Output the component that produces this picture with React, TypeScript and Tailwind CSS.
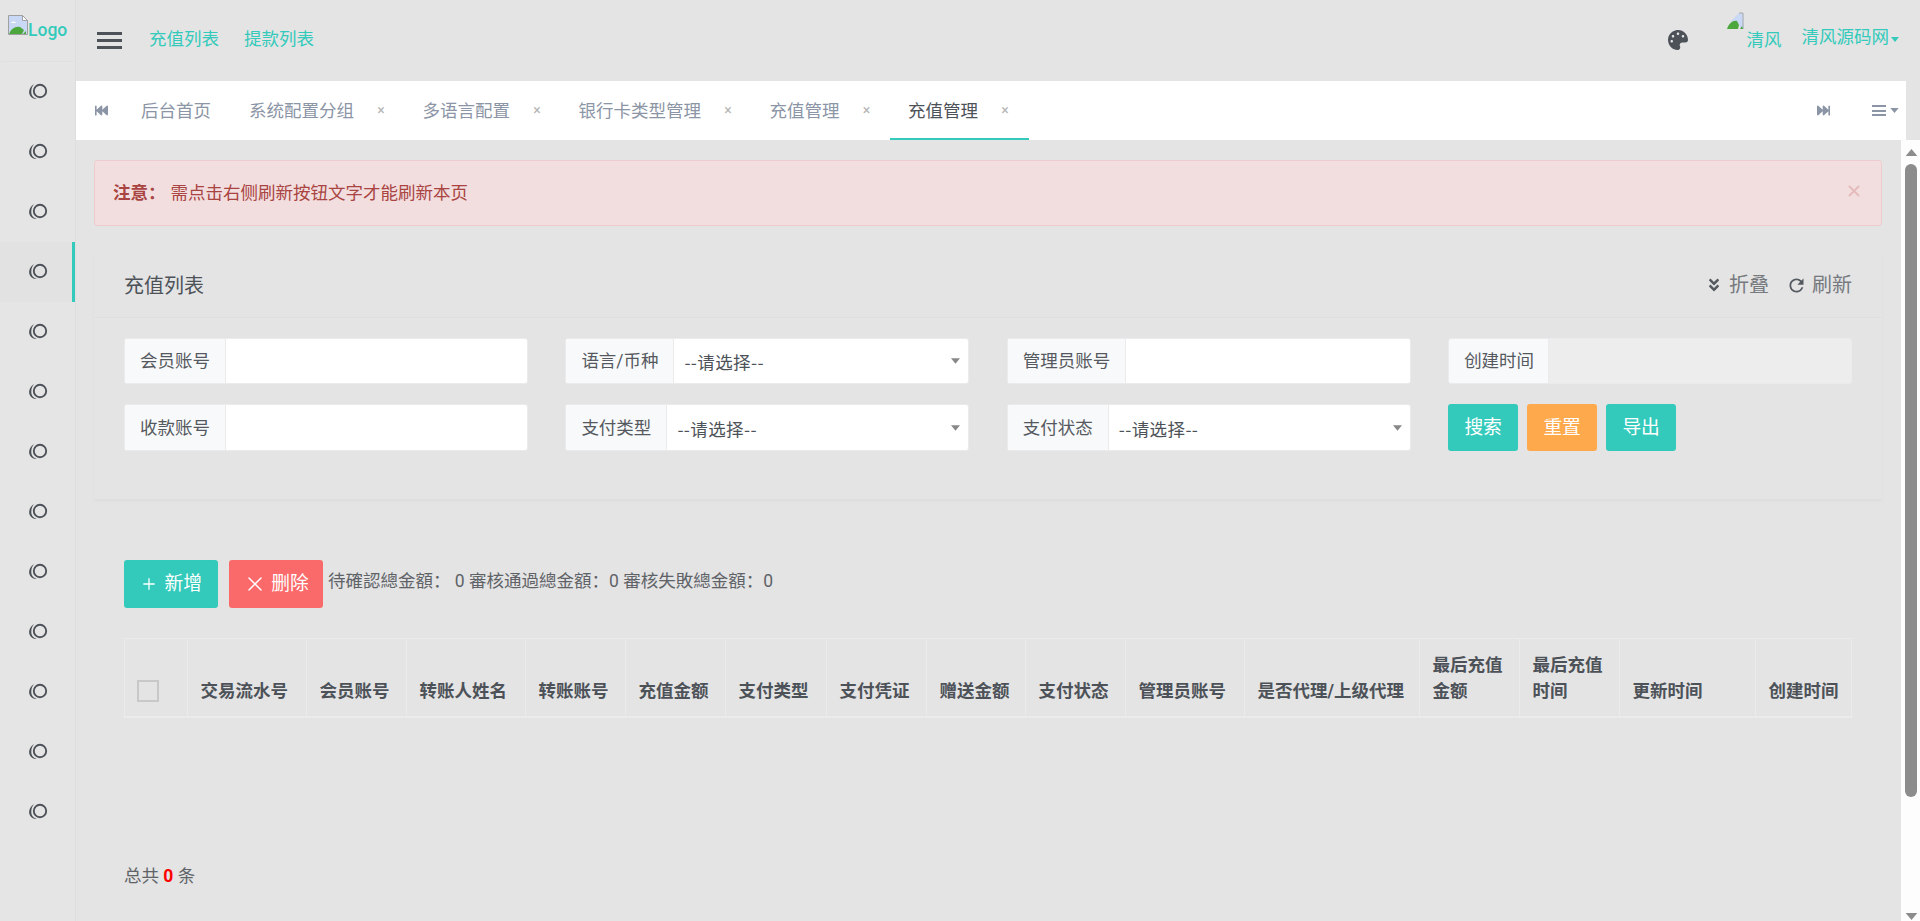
import React from "react";
import { FaPalette, FaFastBackward, FaFastForward, FaAngleDoubleDown } from "react-icons/fa";
import { MdRefresh } from "react-icons/md";
import { Plus, X } from "lucide-react";

const SideIcon = () => (
  <svg width="20" height="20" viewBox="0 0 20 20" fill="none">
    <circle cx="12" cy="10" r="6.2" strokeWidth="1.9" stroke="#4d5259" />
    <path d="M6 3C1.5 6 0 11 2 14.5C3.5 17 6 18.5 9 18C5.5 17 3.3 14.5 3.3 11C3.3 8 4 5.5 6 3Z" fill="#4d5259" />
  </svg>
);

const BrokenImage = () => (
  <svg width="20" height="20" viewBox="0 0 20 20" className="shrink-0">
    <path d="M0.5 0.5H14.5L19.5 5.5V19.5H0.5Z" fill="#c9d8f5" stroke="#a0a0a0" />
    <path d="M14.5 .5V5.5H19.5Z" fill="#fff" stroke="#a0a0a0" />
    <path d="M3 8c1-2 4-2 5 0z" fill="#fff" />
    <path d="M1 19C3 14 7 11 12 12L16 15L14 19Z" fill="#4ca83c" />
    <path d="M15 19l3-3v3z" fill="#4ca83c" />
  </svg>
);

const Tab = ({ label, active, closable = true }: { label: string; active?: boolean; closable?: boolean }) => (
  <div className={`flex h-full items-center pl-[18px] border-b-2 ${active ? "border-[#33cabb] text-[#4d5259]" : "border-transparent text-[#8b95a5]"} ${closable ? "" : "pr-[20px]"}`}>
    <span className="mt-[2px]">{label}</span>
    {closable && (
      <>
        <span className="ml-[21px] w-[12px] text-center text-[14px] text-[#b5b5b5]">×</span>
        <span className="w-[17.5px]" />
      </>
    )}
  </div>
);

const Caret = ({ className }: { className: string }) => (
  <svg viewBox="0 0 10 6" className={className} fill="currentColor"><path d="M0 0h10L5 6z" /></svg>
);

const Field = ({ label, labelW, select, disabled }: { label: string; labelW: string; select?: boolean; disabled?: boolean }) => (
  <div className={`flex h-full overflow-hidden rounded-[3px] border border-[#ebebeb] ${disabled ? "bg-[#ededed]" : "bg-white"}`}>
    <div className={`flex items-center justify-start shrink-0 bg-[#f8f9fa] border-r border-[#ebebeb] pl-[15px] text-[#55595f] ${labelW}`}>{label}</div>
    {select ? (
      <div className="flex flex-1 items-center justify-between pl-[10px] pr-[8px] text-[#4d5259]">
        <span className="mt-[2px] font-['Noto_Sans_CJK_SC',sans-serif] tracking-[0.4px]">--请选择--</span>
        <Caret className="w-[9px] h-[6px] text-[#888888]" />
      </div>
    ) : (
      <input readOnly disabled={disabled} className="flex-1 min-w-0 bg-transparent outline-none" />
    )}
  </div>
);

const columns: { label: string; w: string }[] = [
  { label: "交易流水号", w: "w-[119px]" },
  { label: "会员账号", w: "w-[100px]" },
  { label: "转账人姓名", w: "w-[119px]" },
  { label: "转账账号", w: "w-[100px]" },
  { label: "充值金额", w: "w-[100px]" },
  { label: "支付类型", w: "w-[101px]" },
  { label: "支付凭证", w: "w-[100px]" },
  { label: "赠送金额", w: "w-[99px]" },
  { label: "支付状态", w: "w-[100px]" },
  { label: "管理员账号", w: "w-[119px]" },
  { label: "是否代理/上级代理", w: "w-[175px]" },
  { label: "最后充值金额", w: "w-[100px]" },
  { label: "最后充值时间", w: "w-[100px]" },
  { label: "更新时间", w: "w-[136px]" },
  { label: "创建时间", w: "w-[96px]" },
];

export default function App() {
  return (
    <div className="flex h-[921px] w-[1920px] overflow-hidden bg-[#e4e4e4] font-['Roboto','Noto_Sans_CJK_SC',sans-serif] text-[17.5px] leading-[26px] text-[#5f6368]">
      {/* sidebar */}
      <aside className="w-[76px] shrink-0 border-r border-[#dedede] bg-[#e5e5e5]">
        <div className="mx-px flex h-[62px] items-start border-b border-[#e0e0e0] pl-[7px] pt-[15px]">
          <BrokenImage />
          <span className="mt-[2px] font-medium text-[#33cabb]">Logo</span>
        </div>
        {Array.from({ length: 13 }).map((_, i) => (
          <div key={i} className={`flex h-[60px] items-center pb-[2px] pl-[28px] ${i === 3 ? "border-r-[3px] border-[#33cabb] bg-[#e2e2e2]" : ""}`}>
            <SideIcon />
          </div>
        ))}
      </aside>

      <div className="flex min-w-0 flex-1 flex-col">
        {/* top bar */}
        <header className="flex h-[81px] shrink-0 items-center">
          <div className="ml-[21px] flex h-[17px] w-[25px] flex-col justify-between">
            <span className="h-[3px] bg-[#4d5259]" />
            <span className="h-[3px] bg-[#4d5259]" />
            <span className="h-[3px] bg-[#4d5259]" />
          </div>
          <span className="ml-[27px] mt-[-4px] text-[#33cabb]">充值列表</span>
          <span className="ml-[25px] mt-[-4px] text-[#33cabb]">提款列表</span>
          <FaPalette className="ml-auto mt-[-2px] text-[20px] text-[#4d5259]" />
          <svg width="18" height="18" viewBox="0 0 18 18" className="ml-[39px] mt-[-40px]">
            <path d="M3 10L12 1h4l1 16h-3l-4-8z" fill="#c9d8f5" />
            <path d="M12 1h4v16" fill="none" stroke="#a8a8a8" />
            <path d="M0 17C2 11 6 8 10 9l2 4-1 4z" fill="#4ca83c" />
            <path d="M13 17l2-3 1 3z" fill="#4ca83c" />
          </svg>
          <span className="ml-[2px] mt-[-1px] text-[#33cabb]">清风</span>
          <span className="ml-[20px] mt-[-7px] text-[#33cabb]">清风源码网</span>
          <Caret className="ml-[2px] mr-[21px] mt-[-3px] h-[5px] w-[8px] text-[#33cabb]" />
        </header>

        {/* tabs */}
        <nav className="mr-[14px] flex h-[59px] shrink-0 items-center bg-white pl-[19px] pr-[7px]">
          <FaFastBackward className="text-[13px] text-[#8b95a5]" />
          <div className="ml-[15px] flex h-full items-center">
            <Tab label="后台首页" closable={false} />
            <Tab label="系统配置分组" />
            <Tab label="多语言配置" />
            <Tab label="银行卡类型管理" />
            <Tab label="充值管理" />
            <Tab label="充值管理" active />
          </div>
          <FaFastForward className="ml-auto text-[13px] text-[#8b95a5]" />
          <div className="ml-[42px] flex h-[11px] w-[14px] flex-col justify-between">
            <span className="h-[2px] bg-[#8b95a5]" />
            <span className="h-[2px] bg-[#8b95a5]" />
            <span className="h-[2px] bg-[#8b95a5]" />
          </div>
          <Caret className="ml-[4px] h-[5px] w-[9px] text-[#8b95a5]" />
        </nav>

        <div className="flex min-h-0 flex-1">
          <main className="min-w-0 flex-1 pl-[18px] pr-[19px] pt-[20px]">
            {/* alert */}
            <div className="flex h-[66px] items-center justify-between rounded-[3px] border border-[#eccccf] bg-[#f2dede] pl-[18px] pr-[18px] text-[#a94442]">
              <p>
                <strong className="font-bold">注意：</strong>
                <span className="ml-[5px]">需点击右侧刷新按钮文字才能刷新本页</span>
              </p>
              <X size={18} strokeWidth={2.6} className="mt-[-4px] text-[#e5bcbd]" />
            </div>

            {/* search card */}
            <section className="mt-[27px] h-[246px] shadow-[0_2px_3px_rgba(0,0,0,0.035)]">
              <div className="flex h-[65px] items-center justify-between border-b border-[#dfdfdf] px-[30px]">
                <h2 className="mt-[2px] text-[20px] font-normal text-[#4d5259]">充值列表</h2>
                <div className="flex items-center text-[20px] text-[#76797e]">
                  <FaAngleDoubleDown className="text-[16px] text-[#555a60]" />
                  <span className="ml-[7px]">折叠</span>
                  <MdRefresh className="ml-[17px] text-[21px] text-[#555a60]" />
                  <span className="ml-[5px]">刷新</span>
                </div>
              </div>
              <div className="grid grid-cols-4 grid-rows-[46px_47px] gap-x-[37.5px] gap-y-[20px] px-[30px] pt-[20px]">
                <Field label="会员账号" labelW="w-[101px]" />
                <Field label="语言/币种" labelW="w-[108px]" select />
                <Field label="管理员账号" labelW="w-[118px]" />
                <Field label="创建时间" labelW="w-[100px]" disabled />
                <Field label="收款账号" labelW="w-[101px]" />
                <Field label="支付类型" labelW="w-[101px]" select />
                <Field label="支付状态" labelW="w-[101px]" select />
                <div className="flex gap-[9px] text-[18.75px]">
                  <button className="w-[70px] rounded-[3px] bg-[#33cabb] text-white">搜索</button>
                  <button className="w-[70px] rounded-[3px] bg-[#fea94c] text-white">重置</button>
                  <button className="w-[70px] rounded-[3px] bg-[#33cabb] text-white">导出</button>
                </div>
              </div>
            </section>

            {/* list card */}
            <section className="mt-[35px] px-[30px] pt-[26px]">
              <div className="flex h-[48px] items-start">
                <button className="flex h-[48px] w-[94px] items-center justify-center gap-[6.5px] rounded-[3px] bg-[#33cabb] text-[18.75px] text-white">
                  <Plus size={18} strokeWidth={1.7} />新增
                </button>
                <button className="ml-[11px] flex h-[48px] w-[94px] items-center justify-center gap-[4px] rounded-[3px] bg-[#fb6a6a] text-[18.75px] text-white">
                  <X size={24} strokeWidth={1.5} />删除
                </button>
                <p className="ml-[5px] mt-[8px] whitespace-pre">待確認總金額： 0 審核通過總金額：0 審核失敗總金額：0</p>
              </div>

              <table className="mt-[30px] w-[1727px] table-fixed border-collapse">
                <thead>
                  <tr className="h-[78px] border-t border-b-2 border-[#ebebeb]">
                    <th className="w-[63px] border-x border-[#ebebeb] pb-[14px] pl-[12px] align-bottom">
                      <span className="block h-[22px] w-[22px] border-2 border-[#c8c8c8]" />
                    </th>
                    {columns.map((c) => (
                      <th key={c.label + c.w} className={`${c.w} border-r border-[#ebebeb] pl-[12.5px] pr-[10px] pb-[12px] text-left align-bottom font-bold text-[#4d5259]`}>
                        {c.label}
                      </th>
                    ))}
                  </tr>
                </thead>
              </table>

              <p className="mt-[145px]">
                总共 <b className="font-bold text-[#ff0000]">0</b> 条
              </p>
            </section>
          </main>

          {/* scrollbar drawing */}
          <div className="flex w-[19px] shrink-0 flex-col items-center bg-[#fdfdfd] pl-px">
            <Caret className="mt-[9px] h-[7px] w-[13px] rotate-180 text-[#8c8c8c]" />
            <div className="mt-[8px] h-[633px] w-[12px] rounded-[6px] bg-[#8c8c8c]" />
            <Caret className="mt-auto mb-px h-[7px] w-[13px] text-[#8c8c8c]" />
          </div>
        </div>
      </div>
    </div>
  );
}
